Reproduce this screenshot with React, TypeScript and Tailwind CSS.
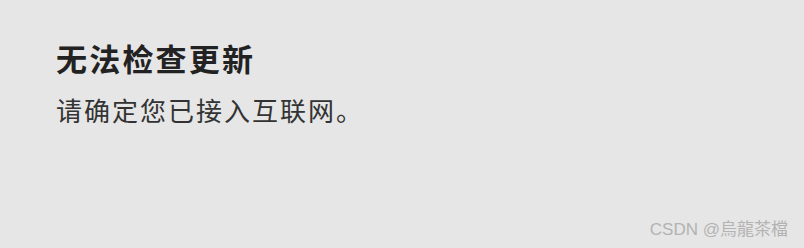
export default function App() {
  return (
    <div
      className="relative h-[248px] w-full overflow-hidden bg-[#e6e6e6]"
      style={{ fontFamily: '"Noto Sans CJK SC", "Noto Sans", sans-serif' }}
    >
      <div className="flex flex-col pl-[56px] pt-[38px]">
        <h1 className="text-[31px] font-bold leading-[40px] tracking-[2.2px] text-[#222222]">
          无法检查更新
        </h1>
        <p className="mt-[14px] text-[26px] leading-[36px] tracking-[2px] text-[#333333]">
          请确定您已接入互联网。
        </p>
      </div>
      <span
        className="absolute bottom-[8px] right-[16px] text-[17px] leading-[20px] text-[#b3b3b3]"
        style={{ fontFamily: '"Liberation Sans", "Noto Sans CJK TC", sans-serif' }}
      >
        CSDN @烏龍茶檔
      </span>
    </div>
  );
}
